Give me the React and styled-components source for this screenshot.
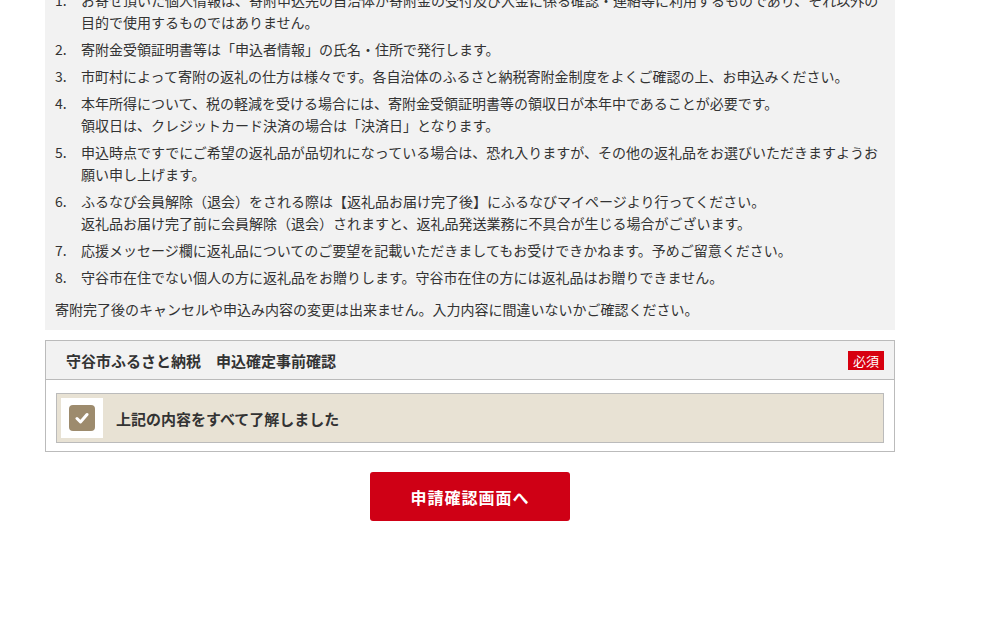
import React from "react";
import styled, { createGlobalStyle } from "styled-components";

const Global = createGlobalStyle`
  body {
    margin: 0;
    background: #fff;
    font-family: "Noto Sans CJK JP", "Noto Sans", sans-serif;
    color: #333;
  }
`;

const Page = styled.div`
  width: 850px;
  margin: -21px 0 0 45px;
`;

const NoticeBox = styled.div`
  background: #f2f2f2;
  padding: 10px 10px 10px 10px;
  font-size: 14px;
  line-height: 22px;
`;

const List = styled.ol`
  list-style: none;
  margin: 0;
  padding: 0;
`;

const Item = styled.li`
  display: flex;
  margin-bottom: 5px;
`;

const Num = styled.span`
  flex: 0 0 26px;
`;

const Note = styled.p`
  margin: 10px 0 0;
`;

const Panel = styled.div`
  margin-top: 10px;
  border: 1px solid #bbb;
`;

const PanelHead = styled.div`
  display: flex;
  align-items: center;
  justify-content: space-between;
  height: 38px;
  padding: 0 10px 0 20px;
  background: #f2f2f2;
  border-bottom: 1px solid #bbb;
`;

const Title = styled.h3`
  margin: 0;
  font-size: 15px;
  font-weight: bold;
  color: #333;
`;

const Badge = styled.span`
  background: #d7000f;
  color: #fff;
  font-size: 13px;
  line-height: 19px;
  padding: 0 5px;
`;

const PanelBody = styled.div`
  padding: 13px 10px 8px;
`;

const CheckRow = styled.label`
  display: flex;
  align-items: center;
  gap: 13px;
  padding: 4px;
  background: #e8e2d4;
  border: 1px solid #bbb;
  font-size: 15px;
  font-weight: bold;
  color: #333;
`;

const BoxWrap = styled.span`
  display: flex;
  align-items: center;
  justify-content: center;
  width: 42px;
  height: 40px;
  background: #fff;
`;

const Check = styled.span`
  display: flex;
  align-items: center;
  justify-content: center;
  width: 26px;
  height: 26px;
  border-radius: 4px;
  background: #9d8b6d;
`;

const Actions = styled.div`
  display: flex;
  justify-content: center;
  margin-top: 20px;
`;

const Submit = styled.button`
  width: 200px;
  height: 49px;
  border: none;
  border-radius: 3px;
  background: #cf0015;
  color: #fff;
  font-family: inherit;
  font-size: 16px;
  font-weight: bold;
  letter-spacing: 1px;
  cursor: pointer;
`;

const items = [
  ["お寄せ頂いた個人情報は、寄附申込先の自治体が寄附金の受付及び入金に係る確認・連絡等に利用するものであり、それ以外の目的で使用するものではありません。"],
  ["寄附金受領証明書等は「申込者情報」の氏名・住所で発行します。"],
  ["市町村によって寄附の返礼の仕方は様々です。各自治体のふるさと納税寄附金制度をよくご確認の上、お申込みください。"],
  ["本年所得について、税の軽減を受ける場合には、寄附金受領証明書等の領収日が本年中であることが必要です。", "領収日は、クレジットカード決済の場合は「決済日」となります。"],
  ["申込時点ですでにご希望の返礼品が品切れになっている場合は、恐れ入りますが、その他の返礼品をお選びいただきますようお願い申し上げます。"],
  ["ふるなび会員解除（退会）をされる際は【返礼品お届け完了後】にふるなびマイページより行ってください。", "返礼品お届け完了前に会員解除（退会）されますと、返礼品発送業務に不具合が生じる場合がございます。"],
  ["応援メッセージ欄に返礼品についてのご要望を記載いただきましてもお受けできかねます。予めご留意ください。"],
  ["守谷市在住でない個人の方に返礼品をお贈りします。守谷市在住の方には返礼品はお贈りできません。"]
];

export default function App() {
  return (
    <Page>
      <Global />
      <NoticeBox>
        <List>
          {items.map((lines, i) => (
            <Item key={i}>
              <Num>{i + 1}.</Num>
              <span>
                {lines.map((l, j) => (
                  <React.Fragment key={j}>
                    {j > 0 && <br />}
                    {l}
                  </React.Fragment>
                ))}
              </span>
            </Item>
          ))}
        </List>
        <Note>寄附完了後のキャンセルや申込み内容の変更は出来ません。入力内容に間違いないかご確認ください。</Note>
      </NoticeBox>

      <Panel>
        <PanelHead>
          <Title>守谷市ふるさと納税　申込確定事前確認</Title>
          <Badge>必須</Badge>
        </PanelHead>
        <PanelBody>
          <CheckRow>
            <BoxWrap>
              <Check>
                <svg width="14" height="12" viewBox="0 0 14 12">
                  <polyline points="2,6.5 5.5,10 12,2.5" fill="none" stroke="#fff" strokeWidth="3" strokeLinecap="round" strokeLinejoin="round" />
                </svg>
              </Check>
            </BoxWrap>
            上記の内容をすべて了解しました
          </CheckRow>
        </PanelBody>
      </Panel>

      <Actions>
        <Submit>申請確認画面へ</Submit>
      </Actions>
    </Page>
  );
}
